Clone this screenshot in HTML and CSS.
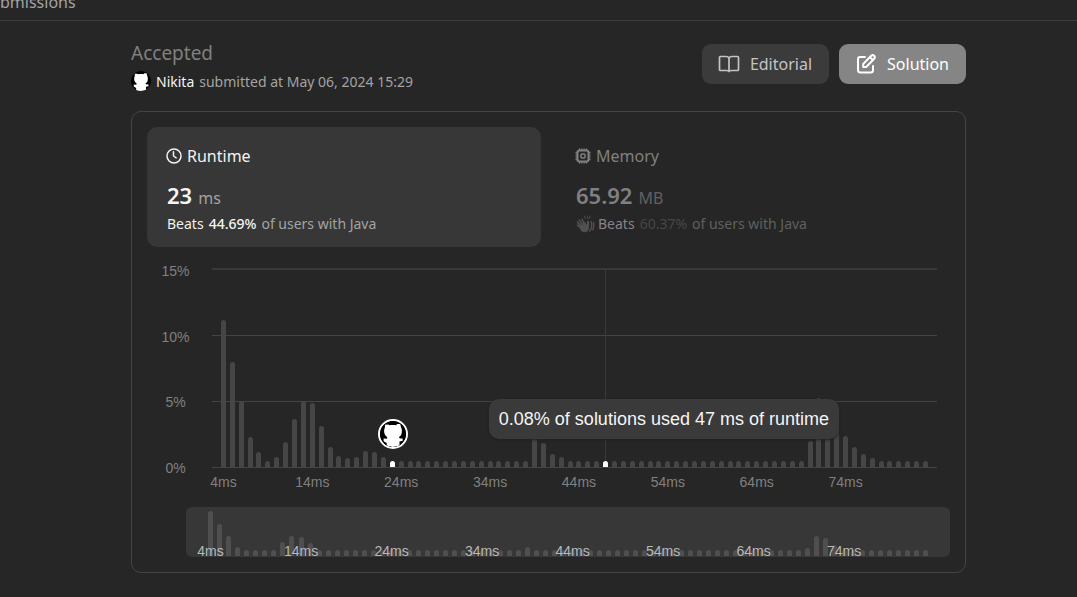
FILE: index.html
```html
<!DOCTYPE html>
<html lang="en">
<head>
<meta charset="utf-8">
<title>Submission result</title>
<link rel="stylesheet" href="styles.css">
</head>
<body>
<svg class="sprite" aria-hidden="true">
  <symbol id="cat" viewBox="0 0 24 24">
    <circle cx="12" cy="12" r="12" fill="#000"/>
    <path fill="#fff" d="M4.600 3.400 7.400 3.200 9 4 C11 3.600 13 3.600 14.600 3.900 L16 2.800 18.600 2.800 19.400 5.500 C20.600 8 20.400 11 19.400 13.200 L17.400 15 C18 16.200 19.500 16.400 20.800 16 L21 18.200 18 19 18 22.600 C14 24.300 10 24.300 6.200 22.700 L6.200 20.400 3.400 18.600 3.300 16.200 6.200 16.400 6.800 15 C4.400 13.400 3.600 11 3.800 8.600 3.900 7.500 4.300 6.600 4.500 6 Z"/>
  </symbol>
</svg>
<header class="tabs"><a class="tab" href="#">bmissions</a></header>
<main class="page">
  <section class="summary">
    <div class="status">
      <h1 class="verdict">Accepted</h1>
      <p class="author"><svg class="avatar" aria-hidden="true"><use href="#cat"/></svg><a class="user" href="#">Nikita</a><span>submitted at May 06, 2024 15:29</span></p>
    </div>
    <div class="actions">
      <button class="btn" type="button">
        <svg class="btn-icon" viewBox="0 0 22 22" fill="none" stroke="currentColor" stroke-width="1.7" stroke-linejoin="round" stroke-linecap="round" aria-hidden="true"><path d="M11 5.200C10.500 4 9.500 3.500 8 3.500H2.500C1.900 3.500 1.500 3.900 1.500 4.500V16.500C1.500 17.200 1.900 17.500 2.500 17.500H8.500C10 17.500 11 17.900 11 18.500C11 17.900 12 17.500 13.500 17.500H19.500C20.100 17.500 20.500 17.200 20.500 16.500V4.500C20.500 3.900 20.100 3.500 19.500 3.500H14C12.500 3.500 11.500 4 11 5.200ZM11 5.200V18.500"/></svg>
        Editorial
      </button>
      <button class="btn btn-primary" type="button">
        <svg class="btn-icon" viewBox="0 0 22 22" fill="none" stroke="currentColor" stroke-width="2" stroke-linejoin="round" stroke-linecap="round" aria-hidden="true"><path d="M10 4H5Q3 4 3 6V17Q3 19.500 5.500 19.500H15.500Q18 19.500 18 17.500V13M8.200 14V11L16.200 2.700Q17.700 1.500 19.200 2.800Q20.500 4.200 19.200 5.800L11.200 14ZM15 4.300 17.800 7"/></svg>
        Solution
      </button>
    </div>
  </section>

  <section class="card">
    <div class="metrics">
      <article class="metric metric-active">
        <h2 class="metric-title"><svg class="metric-icon" viewBox="0 0 16 16" fill="none" stroke="currentColor" stroke-width="1.500" stroke-linecap="round" stroke-linejoin="round" aria-hidden="true"><circle cx="8" cy="8" r="7"/><path d="M7.500 3.800V8L10.200 9.800"/></svg>Runtime</h2>
        <p class="metric-value"><strong>23</strong><span class="unit">ms</span></p>
        <p class="metric-note"><span class="beats">Beats</span><b>44.69%</b><span>of users with Java</span></p>
      </article>
      <article class="metric metric-muted">
        <h2 class="metric-title"><svg class="metric-icon" viewBox="0 0 16 16" fill="none" stroke="currentColor" stroke-width="2" aria-hidden="true"><rect x="2.500" y="2.500" width="11" height="11" rx="2"/><rect x="6" y="6" width="4" height="4" rx="1" stroke-width="1.500"/><path stroke-width="1.300" d="M4.500 .5V2.500M6.800 .5V2.500M9.200 .5V2.500M11.500 .5V2.500M4.500 13.500V15.500M6.800 13.500V15.500M9.200 13.500V15.500M11.500 13.500V15.500M.5 4.500H2.500M.5 6.800H2.500M.5 9.200H2.500M.5 11.500H2.500M13.500 4.500H15.500M13.500 6.800H15.500M13.500 9.200H15.500M13.500 11.500H15.500"/></svg>Memory</h2>
        <p class="metric-value"><strong>65.92</strong><span class="unit">MB</span></p>
        <p class="metric-note"><svg class="wave" viewBox="0 0 20 18" fill="none" stroke="currentColor" stroke-linecap="round" aria-hidden="true"><path stroke-width="1.700" d="M6 11.500 1.500 7M7.500 10 3.300 4.800M9 8.500 6.300 4.200M6 13.500 1.500 10.300"/><path fill="currentColor" stroke="none" d="M3.500 12 9 7 11.500 9.500 11.600 6.500C12 5 13.800 5.300 13.800 7V12.500C13.800 18.500 7.500 19 5 15.500Z"/><path stroke-width="1.500" d="M16 6.500Q17.500 12.500 14.500 16.500M18.500 7.500Q19 13 17.500 15"/><path stroke-width="1" d="M9 .8 9.800 3.200M12 .5V3M15 .8 13.800 3.200"/></svg><span class="beats">Beats</span><span class="dim">60.37%</span><span>of users with Java</span></p>
      </article>
    </div>

    <div class="chart">
      <div class="y-axis"><span>15%</span><span>10%</span><span>5%</span><span>0%</span></div>
      <div class="plot">
        <div class="gridlines"><i></i><i></i><i></i></div>
        <div class="bars" id="bars"></div>
        <div class="cursor"></div>
        <svg class="marker" aria-label="Your submission"><use href="#cat"/></svg>
        <div class="tooltip" role="tooltip">0.08% of solutions used 47 ms of runtime</div>
      </div>
      <div class="x-axis" id="axis"></div>
    </div>
    <div class="overview">
      <div class="bars overview-bars" id="overview-bars"></div>
      <div class="x-axis overview-axis" id="overview-axis"></div>
    </div>
  </section>
</main>
<script src="chart.js"></script>
</body>
</html>
```
FILE: styles.css
```css
* { box-sizing: border-box; }
body {
  margin: 0;
  background: #262626;
  color: #a3a3a3;
  font-family: "Noto Sans", sans-serif;
  font-size: 14px;
}
h1, h2, p { margin: 0; font-weight: 400; }
a { color: inherit; text-decoration: none; }
svg { flex: none; }
.sprite { position: absolute; width: 0; height: 0; }

.tabs {
  display: flex;
  align-items: flex-end;
  height: 21px;
  padding-bottom: 7px;
  overflow: hidden;
  border-bottom: 1px solid #3d3d3d;
}
.tab { font-size: 16px; line-height: 22px; }

.page { padding: 19px 111px 24px 131px; }
.summary { display: flex; justify-content: space-between; }
.verdict { color: #808080; font-size: 19px; line-height: 26px; }
.author { display: flex; align-items: center; gap: 5px; height: 30px; }
.avatar { width: 20px; height: 20px; }
.user { color: #f5f5f5; }
.actions { display: flex; gap: 10px; padding: 4px 0 27px; }
.btn {
  display: flex;
  align-items: center;
  gap: 10px;
  height: 40px;
  padding: 0 17px 0 16px;
  border: 0;
  border-radius: 9px;
  background: #3b3b3b;
  color: #c4c4c4;
  font: 16px "Noto Sans", sans-serif;
}
.btn-primary { background: #858585; color: #fff; }
.btn-icon { width: 22px; height: 22px; }

.card { padding: 15px; border: 1px solid #444; border-radius: 10px; }
.metrics { display: grid; grid-template-columns: 1fr 1fr; gap: 15px; }
.metric { height: 120px; padding: 17px 20px; border-radius: 10px; }
.metric-active { background: #373737; color: #a3a3a3; }
.metric-title { display: flex; align-items: center; gap: 5px; color: #f2f2f2; font-size: 16px; line-height: 24px; }
.metric-icon { width: 16px; height: 16px; margin-left: -1px; }
.metric-value { display: flex; align-items: baseline; gap: 6px; margin-top: 12px; line-height: 30px; font-size: 16px; }
.metric-value strong { color: #f5f5f5; font-size: 22px; font-weight: 600; }
.metric-note { display: flex; align-items: center; gap: 5px; line-height: 22px; }
.metric-note b { color: #f5f5f5; font-weight: 500; }
.beats { color: #f0f0f0; }
.metric-muted { color: #606060; }
.metric-muted .metric-title, .metric-muted strong { color: #808080; }
.metric-muted .beats { color: #858585; }
.metric-muted .dim { color: #464646; }
.wave { width: 19px; height: 18px; margin-right: -2px; color: #505050; }

.chart {
  display: grid;
  grid-template-columns: 57px 1fr;
  grid-template-rows: 200px 29px;
  column-gap: 8px;
  padding: 21px 13px 0 0;
  color: #808080;
  font: 14px "Liberation Sans", Arial, sans-serif;
}
.y-axis { display: flex; flex-direction: column; justify-content: space-between; align-items: center; height: 214px; margin-top: -5px; line-height: 17px; }
.plot { position: relative; border-bottom: 1px solid #444; }
.gridlines { position: absolute; inset: 0; display: flex; flex-direction: column; }
.gridlines i { flex: 1; border-top: 1px solid #444; }
.gridlines i:first-child { border-top: 2px solid #393939; }
.bars { display: grid; grid-template-columns: repeat(80, 1fr); align-items: end; justify-items: center; height: 100%; }
.bar { width: 5px; border-radius: 3px 3px 0 0; background: #464646; }
.bar-active { background: #fff; }
.plot .bars { position: absolute; inset: 0; padding: 0 7px; }
.cursor { position: absolute; top: 0; bottom: 7px; left: calc(7px + (100% - 14px) * 43.5 / 80 - 1px); width: 1px; background: #3a3a3a; }
.marker {
  position: absolute;
  bottom: 18px;
  left: calc(7px + (100% - 14px) * 19.5 / 80 - 14px);
  width: 30px;
  height: 30px;
  border: 2px solid #fff;
  border-radius: 50%;
  background: #000;
}
.tooltip {
  position: absolute;
  top: 131px;
  right: 98px;
  padding: 0 10px;
  border-radius: 10px;
  background: #3a3a3a;
  box-shadow: 0 1px 3px #202020;
  color: #f5f5f5;
  font-size: 18px;
  line-height: 40px;
  white-space: nowrap;
}
.x-axis { display: grid; grid-template-columns: repeat(80, 1fr); justify-items: center; line-height: 17px; white-space: nowrap; }
.chart .x-axis { grid-column: 2; padding: 6px 7px 0; }
.x-axis span { grid-row: 1; width: 0; display: flex; justify-content: center; }

.overview {
  position: relative;
  height: 50px;
  margin: 10px 0 0 39px;
  padding: 0 20px 1px;
  border-radius: 6px;
  background: #373737;
  font: 14px "Liberation Sans", Arial, sans-serif;
}
.overview-bars .bar { background: #4f4f4f; }
.overview-axis { position: absolute; inset: auto 20px -3px; color: #b8b8b8; }
```
FILE: chart.js
```js
const COUNT = 80;
const fill = (runs) => {
  const values = Array(COUNT).fill(6);
  for (const [start, list] of Object.entries(runs)) {
    list.forEach((v, i) => { values[Number(start) + i] = v; });
  }
  return values;
};

const runtime = fill({
  0: [147, 105, 66, 30, 15, 6, 10, 25, 48, 66, 64, 41, 20, 11, 9, 10, 16, 15, 10],
  35: [40, 24, 13, 10],
  66: [26, 69, 55, 41, 31, 20, 13, 9]
});
const overview = fill({
  0: [45, 32, 20, 9],
  8: [14, 20, 19, 13],
  35: [9],
  66: [8, 20, 18, 11]
});

function drawBars(id, values, max, active) {
  const root = document.getElementById(id);
  values.forEach((v, i) => {
    const bar = document.createElement("div");
    bar.className = active.includes(i) ? "bar bar-active" : "bar";
    bar.style.height = (v / max * 100) + "%";
    root.append(bar);
  });
}

function drawAxis(id) {
  const root = document.getElementById(id);
  for (let i = 0; i < COUNT; i += 10) {
    const label = document.createElement("span");
    label.textContent = (i + 4) + "ms";
    label.style.gridColumn = i + 1;
    root.append(label);
  }
}

drawBars("bars", runtime, 199, [19, 43]);
drawBars("overview-bars", overview, 49, []);
drawAxis("axis");
drawAxis("overview-axis");
```
